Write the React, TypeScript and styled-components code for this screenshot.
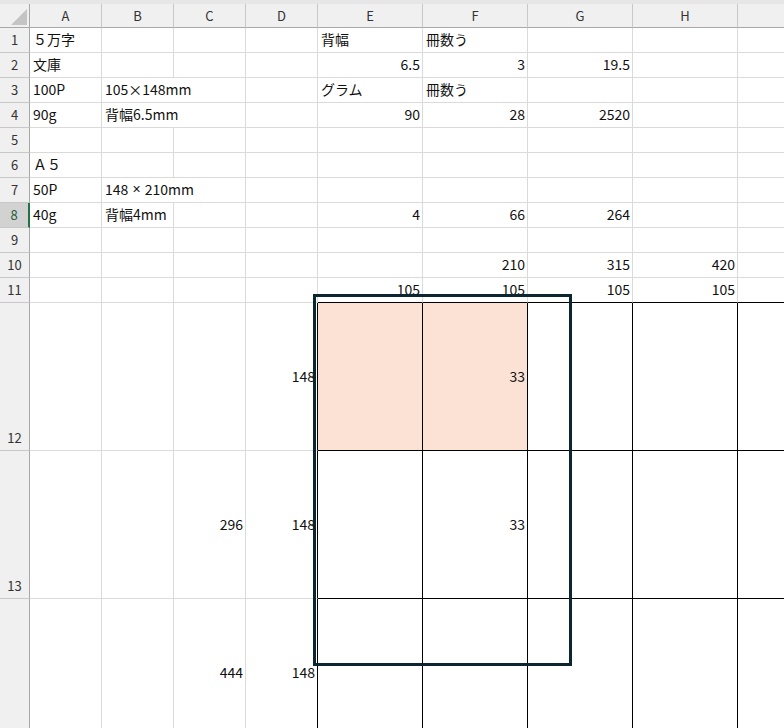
import * as React from "react";
import styled, { createGlobalStyle } from "styled-components";

const GlobalStyle = createGlobalStyle`
  html, body {
    margin: 0;
    padding: 0;
    background: #ffffff;
    overflow: hidden;
  }
  body {
    font-family: "Noto Sans CJK JP", "Noto Sans", sans-serif;
  }
`;

const COLS = ["A", "B", "C", "D", "E", "F", "G", "H", "I"];
const WIDTHS = [72, 72, 72, 72, 105, 105, 105, 105, 105];
const HEIGHTS = [25, 25, 25, 25, 25, 25, 25, 25, 25, 25, 25, 148, 148, 148];
// rows / columns that run past the window edge: no label drawn for them
const VISIBLE_COL_LABELS = 8;
const VISIBLE_ROW_LABELS = 13;

const GRID = "#dadada";
const INK = "#000000";

type CellData = { text: React.ReactNode; right?: boolean; span?: number; fill?: string };

const PINK = "#fbe2d5";

// half-width multiplication sign (the CJK font draws it full width)
const Times = styled.span`
  font-family: "Liberation Sans", sans-serif;
  padding: 0 1px;
`;

const DATA: Record<string, CellData> = {
  A1: { text: "５万字" },
  E1: { text: "背幅" },
  F1: { text: "冊数う" },
  A2: { text: "文庫" },
  E2: { text: "6.5", right: true },
  F2: { text: "3", right: true },
  G2: { text: "19.5", right: true },
  A3: { text: "100P" },
  B3: { text: "105×148mm", span: 2 },
  E3: { text: "グラム" },
  F3: { text: "冊数う" },
  A4: { text: "90g" },
  B4: { text: "背幅6.5mm", span: 2 },
  E4: { text: "90", right: true },
  F4: { text: "28", right: true },
  G4: { text: "2520", right: true },
  A6: { text: "Ａ５" },
  A7: { text: "50P" },
  B7: {
    text: (
      <>
        148 <Times>×</Times> 210mm
      </>
    ),
    span: 2,
  },
  A8: { text: "40g" },
  B8: { text: "背幅4mm" },
  E8: { text: "4", right: true },
  F8: { text: "66", right: true },
  G8: { text: "264", right: true },
  F10: { text: "210", right: true },
  G10: { text: "315", right: true },
  H10: { text: "420", right: true },
  E11: { text: "105", right: true },
  F11: { text: "105", right: true },
  G11: { text: "105", right: true },
  H11: { text: "105", right: true },
  D12: { text: "148", right: true },
  E12: { text: "", fill: PINK },
  F12: { text: "33", right: true, fill: PINK },
  C13: { text: "296", right: true },
  D13: { text: "148", right: true },
  F13: { text: "33", right: true },
  C14: { text: "444", right: true },
  D14: { text: "148", right: true },
};

const Sheet = styled.div`
  position: relative;
  display: grid;
  grid-template-columns: 30px ${WIDTHS.map((w) => `${w}px`).join(" ")};
  grid-template-rows: 4px 24px ${HEIGHTS.map((h) => `${h}px`).join(" ")};
  width: 784px;
  height: 728px;
  overflow: hidden;
`;

const TopStrip = styled.div`
  grid-column: 1 / -1;
  grid-row: 1;
  background: #e6e6e6;
`;

const Corner = styled.div`
  grid-column: 1;
  grid-row: 2;
  background: #f0f0f0;
  border-right: 1px solid #a8a8a8;
  border-bottom: 1px solid #a8a8a8;
  display: flex;
  align-items: flex-end;
  justify-content: flex-end;
  padding: 0 2px 2px 0;
`;

const ColHead = styled.div<{ $col: number }>`
  grid-column: ${(p) => p.$col};
  grid-row: 2;
  background: #f0f0f0;
  border-right: 1px solid #c8c8c8;
  border-bottom: 1px solid #a8a8a8;
  display: flex;
  align-items: center;
  justify-content: center;
  font-size: 13px;
  color: #333333;
`;

const RowHead = styled.div<{ $row: number; $selected?: boolean }>`
  grid-column: 1;
  grid-row: ${(p) => p.$row};
  background: ${(p) => (p.$selected ? "#d2d2d2" : "#f0f0f0")};
  border-right: ${(p) => (p.$selected ? "2px solid #217346" : "1px solid #a8a8a8")};
  border-bottom: 1px solid #c8c8c8;
  display: flex;
  align-items: flex-end;
  justify-content: center;
  padding-bottom: 3px;
  font-size: 13px;
  line-height: 18px;
  color: ${(p) => (p.$selected ? "#1e5e3a" : "#333333")};
`;

const Cell = styled.div<{
  $col: number;
  $row: number;
  $span: number;
  $right?: boolean;
  $fill?: string;
  $edgeRight: string;
  $edgeBottom: string;
}>`
  grid-column: ${(p) => p.$col} / span ${(p) => p.$span};
  grid-row: ${(p) => p.$row};
  display: flex;
  align-items: center;
  justify-content: ${(p) => (p.$right ? "flex-end" : "flex-start")};
  padding: 0 2px 2px 3px;
  background: ${(p) => p.$fill ?? "#ffffff"};
  border-right: 1px solid ${(p) => p.$edgeRight};
  border-bottom: 1px solid ${(p) => p.$edgeBottom};
  font-size: 14px;
  color: #111111;
  white-space: pre;
  min-width: 0;
`;

const Frame = styled.div`
  position: absolute;
  left: 313px;
  top: 294px;
  width: 259px;
  height: 372px;
  border: 3px solid #0c2630;
  box-sizing: border-box;
  pointer-events: none;
`;

function CornerMark() {
  return (
    <svg width="16" height="16" viewBox="0 0 16 16">
      <polygon points="16,0 16,16 0,16" fill="#c4c4c4" />
    </svg>
  );
}

// which gridline colour a cell edge gets (black where cell borders were set)
function edges(c: number, r: number) {
  const bordered = c >= 4; // E and on
  let right = GRID;
  let bottom = GRID;
  if (r === 11 && bordered) bottom = INK;
  if (r >= 12) {
    if (c >= 3) right = INK;
    if (bordered) bottom = INK;
  }
  return { right, bottom };
}

export default function App() {
  const cells: React.ReactNode[] = [];
  HEIGHTS.forEach((_, ri) => {
    const r = ri + 1;
    let skip = 0;
    COLS.forEach((col, ci) => {
      if (skip > 0) {
        skip--;
        return;
      }
      const d = DATA[`${col}${r}`];
      const span = d?.span ?? 1;
      skip = span - 1;
      const e = edges(ci + span - 1, r);
      cells.push(
        <Cell
          key={`${col}${r}`}
          $col={ci + 2}
          $row={r + 2}
          $span={span}
          $right={d?.right}
          $fill={d?.fill}
          $edgeRight={e.right}
          $edgeBottom={e.bottom}
        >
          {d?.text}
        </Cell>
      );
    });
  });

  return (
    <>
      <GlobalStyle />
      <Sheet>
        <TopStrip />
        <Corner>
          <CornerMark />
        </Corner>
        {COLS.map((c, i) => (
          <ColHead key={c} $col={i + 2}>
            {i < VISIBLE_COL_LABELS ? c : null}
          </ColHead>
        ))}
        {HEIGHTS.map((_, i) => (
          <RowHead key={i} $row={i + 3} $selected={i + 1 === 8}>
            {i < VISIBLE_ROW_LABELS ? i + 1 : null}
          </RowHead>
        ))}
        {cells}
        <Frame />
      </Sheet>
    </>
  );
}
